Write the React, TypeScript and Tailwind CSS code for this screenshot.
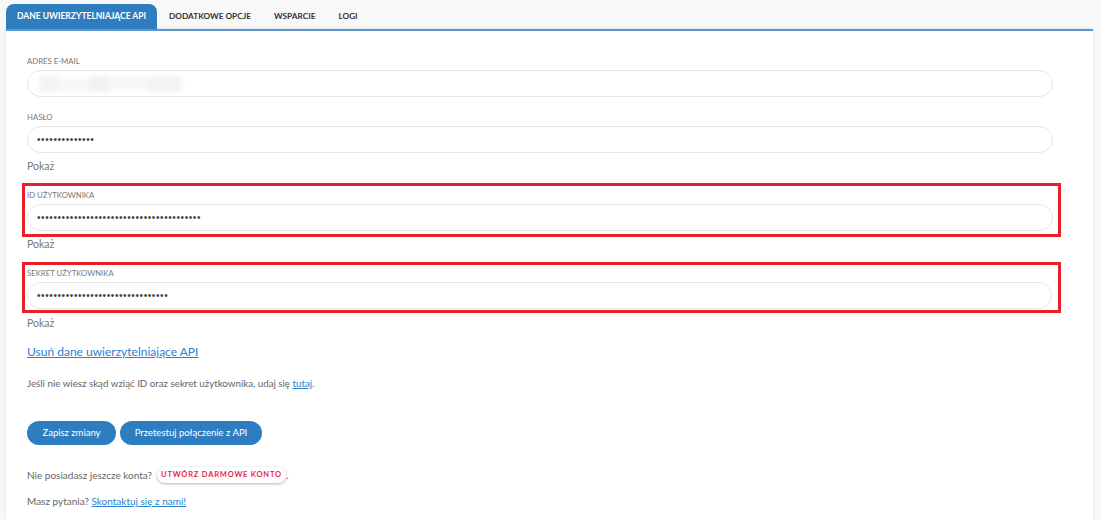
import React from "react";

const font = { fontFamily: 'Lato, "Open Sans", sans-serif' };

function Dots({ n }: { n: number }) {
  return (
    <span className="text-[10px] tracking-[0.6px] text-[#444]" style={{ fontFamily: '"Liberation Sans", sans-serif' }}>
      {"•".repeat(n)}
    </span>
  );
}

function Field({ label, children }: { label: string; children?: React.ReactNode }) {
  return (
    <div>
      <div className="text-[7.75px] leading-[10px] uppercase text-[#777]">{label}</div>
      <div className="mt-[4px] h-[27px] rounded-full border border-[#e6e6e6] bg-white flex items-center pl-[9px]">
        {children}
      </div>
    </div>
  );
}

function Pokaz() {
  return <div className="text-[10.5px] leading-[14px] text-[#777]">Pokaż</div>;
}

export default function App() {
  return (
    <div className="w-[1101px] h-[520px] bg-[#f8f8f8] overflow-hidden" style={font}>
      <div className="pt-[4px] pl-[6px] flex items-end h-[29px]">
        <div className="h-[25px] w-[151px] justify-center bg-[#2f7dc1] rounded-t-[8px] text-white text-[8.5px] font-bold flex items-center">
          DANE UWIERZYTELNIAJĄCE API
        </div>
        <div className="h-[25px] flex items-center text-[8.25px] font-bold text-[#333]">
          <span className="ml-[12px]">DODATKOWE OPCJE</span>
          <span className="ml-[23px]">WSPARCIE</span>
          <span className="ml-[23px]">LOGI</span>
        </div>
      </div>
      <div className="ml-[6px] w-[1087px] h-[491px] bg-white border-t-2 border-[#5b95cc] shadow-[0_0_3px_rgba(0,0,0,0.12)] pl-[21px] pr-[40px] pt-[25px]">
        <Field label="ADRES E-MAIL">
          <div className="flex gap-0 blur-[2px] opacity-60 ml-[2px]">
            <div className="w-[20px] h-[16px] bg-[#ececec]" />
            <div className="w-[30px] h-[14px] bg-[#f3f3f3] mt-[2px]" />
            <div className="w-[20px] h-[16px] bg-[#e8e8e8]" />
            <div className="w-[40px] h-[14px] bg-[#f1f1f1]" />
            <div className="w-[33px] h-[16px] bg-[#ececec]" />
          </div>
        </Field>
        <div className="mt-[15px]">
          <Field label="HASŁO">
            <Dots n={14} />
          </Field>
        </div>
        <div className="mt-[6px]">
          <Pokaz />
        </div>
        <div className="mt-[10px] -ml-[5px] -mr-[8px] border-[3px] border-[#e8202a] pl-[2px] pr-[5px] pt-[4px] pb-[3px]">
          <Field label="ID UŻYTKOWNIKA">
            <Dots n={40} />
          </Field>
        </div>
        <Pokaz />
        <div className="mt-[11px] -ml-[5px] -mr-[8px] border-[3px] border-[#e8202a] pl-[2px] pr-[6px] pt-[3px] pb-[1px]">
          <Field label="SEKRET UŻYTKOWNIKA">
            <Dots n={32} />
          </Field>
        </div>
        <div className="mt-[3px]">
          <Pokaz />
        </div>
        <div className="mt-[13px] text-[12px] leading-[18px] text-[#2a7fcf] underline">
          Usuń dane uwierzytelniające API
        </div>
        <div className="mt-[15px] text-[9.75px] leading-[14px] text-[#666]">
          Jeśli nie wiesz skąd wziąć ID oraz sekret użytkownika, udaj się{" "}
          <span className="text-[#2a7fcf] underline">tutaj</span>.
        </div>
        <div className="mt-[31px] flex gap-[4px]">
          <button className="h-[24px] w-[89px] rounded-full bg-[#2f7dc1] text-white text-[9.5px]">Zapisz zmiany</button>
          <button className="h-[24px] w-[142px] rounded-full bg-[#2f7dc1] text-white text-[9.5px]">Przetestuj połączenie z API</button>
        </div>
        <div className="mt-[22px] flex items-center text-[10px] leading-[16px] text-[#666]">
          <span>Nie posiadasz jeszcze konta?</span>
          <span className="ml-[5px] h-[16px] w-[129px] justify-center rounded-full bg-white shadow-[0_1px_3px_rgba(0,0,0,0.3)] text-[#e8264a] text-[7.5px] font-bold tracking-[0.8px] flex items-center">
            UTWÓRZ DARMOWE KONTO
          </span>
          <span>.</span>
        </div>
        <div className="mt-[11px] text-[10px] leading-[14px] text-[#666]">
          Masz pytania? <span className="text-[#2a7fcf] underline">Skontaktuj się z nami!</span>
        </div>
      </div>
    </div>
  );
}
